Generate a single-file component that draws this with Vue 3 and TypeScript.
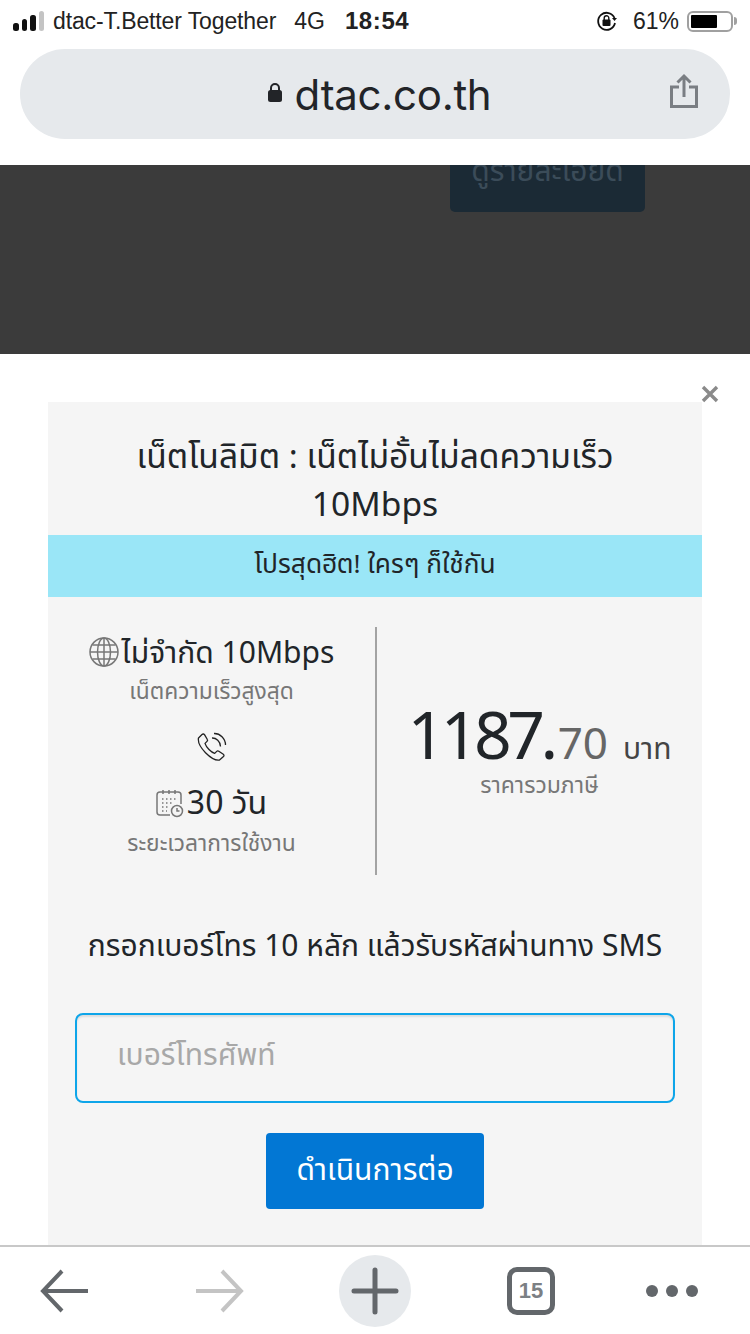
<script setup lang="ts">
const signalBars = [
  { h: 8, on: true },
  { h: 12, on: true },
  { h: 16, on: true },
  { h: 20, on: false },
]
</script>

<template>
  <div class="phone">
    <div class="status">
      <div class="signal">
        <i v-for="(b, n) in signalBars" :key="n" :class="{ off: !b.on }" :style="{ height: b.h + 'px' }" />
      </div>
      <span class="carrier">dtac-T.Better Together</span>
      <span class="net">4G</span>
      <span class="time">18:54</span>
      <svg class="orient" width="22" height="22" viewBox="0 0 22 22" fill="none">
        <path d="M18.500 8A8.500 8.500 0 1 0 19 13" stroke="#111" stroke-width="1.800" />
        <path d="M16 8h5l-2.500 3z" fill="#111" />
        <rect x="6.500" y="9.500" width="8" height="6.500" rx="1" fill="#111" />
        <path d="M8.200 10V8a2.300 2.300 0 0 1 4.600 0v2" stroke="#111" stroke-width="1.400" />
      </svg>
      <span class="pct">61%</span>
      <div class="battery"><b /></div>
      <div class="nub" />
    </div>

    <div class="address-wrap">
      <div class="address">
        <svg class="lock" width="16" height="22" viewBox="0 0 16 22">
          <path d="M4 10V7a4 4 0 0 1 8 0v3" fill="none" stroke="#222428" stroke-width="2" />
          <rect x="1" y="9" width="14" height="12" rx="2.500" fill="#222428" />
        </svg>
        <span class="url">dtac.co.th</span>
        <svg class="share" width="30" height="36" viewBox="0 0 30 36" fill="none" stroke="#7a7e83" stroke-width="3">
          <path d="M10 14H2.500v19.500h25V14H20" />
          <path d="M15 24V3M8.500 9.500 15 3l6.500 6.500" />
        </svg>
      </div>
    </div>

    <div class="backdrop">
      <div class="dim-btn">ดูรายละเอียด</div>
    </div>

    <div class="sheet">
      <svg class="close" width="18" height="18" viewBox="0 0 18 18">
        <path d="M2 2l14 14M16 2 2 16" stroke="#8a8a8a" stroke-width="3.400" />
      </svg>
      <div class="card">
        <h1 class="title">เน็ตโนลิมิต : เน็ตไม่อั้นไม่ลดความเร็ว<br />10Mbps</h1>
        <div class="promo">โปรสุดฮิต! ใครๆ ก็ใช้กัน</div>
        <div class="plan">
          <div class="features">
            <div class="feature-main narrow">
              <svg width="30" height="30" viewBox="0 0 30 30" fill="none" stroke="#777" stroke-width="1.500">
                <circle cx="15" cy="15" r="14" />
                <ellipse cx="15" cy="15" rx="6.500" ry="14" />
                <path d="M15 1v28M1 15h28M3.500 8h23M3.500 22h23" />
              </svg>
              <span>ไม่จำกัด 10Mbps</span>
            </div>
            <div class="feature-sub">เน็ตความเร็วสูงสุด</div>
            <svg class="call" width="30" height="30" viewBox="0 0 30 30" fill="none" stroke="#222" stroke-width="1.300" stroke-linejoin="round">
              <path d="M5 2.500 1.500 6c-.8 4 2.500 10 7 14.700 4.500 4.500 10 8 14 7.300l4-3.500c.7-.8.6-1.700-.2-2.300l-4.500-3c-.8-.5-1.500-.4-2.100.2l-2 2c-3.500-1-8.500-6-9.700-10l2-2c.6-.6.700-1.400.2-2.100L7.500 2.600C6.800 1.800 5.800 1.800 5 2.500z" />
              <path d="M15 6c4-.3 8.500 3.500 8.500 8.500M17 1.500c6-.3 11.500 5 11.500 11.500" />
            </svg>
            <div class="feature-main">
              <svg width="28" height="28" viewBox="0 0 28 28" fill="none" stroke="#777" stroke-width="1.500">
                <path d="M14 25H4a3 3 0 0 1-3-3V5a3 3 0 0 1 3-3h18a3 3 0 0 1 3 3v9" />
                <path d="M7 0v4M13 0v4M19 0v4" />
                <path d="M6 9h14M6 13h10M6 17h7M6 21h5" stroke-dasharray="1.500 2.500" />
                <circle cx="21" cy="21" r="5.500" />
                <path d="M21 18v3h2.500" />
              </svg>
              <span>30 วัน</span>
            </div>
            <div class="feature-sub">ระยะเวลาการใช้งาน</div>
          </div>
          <div class="price-col">
            <div class="price"><span class="big">1187.</span><span class="dec">70</span><span class="unit">บาท</span></div>
            <div class="feature-sub wide">ราคารวมภาษี</div>
          </div>
        </div>
        <p class="prompt">กรอกเบอร์โทร 10 หลัก แล้วรับรหัสผ่านทาง SMS</p>
        <div class="field-wrap">
          <input class="field" type="text" placeholder="เบอร์โทรศัพท์" />
        </div>
        <div class="actions">
          <button class="go" type="button">ดำเนินการต่อ</button>
        </div>
      </div>
    </div>

    <div class="toolbar">
      <svg width="48" height="44" viewBox="0 0 48 44" fill="none" stroke="#63676b" stroke-width="4">
        <path d="M48 22H4M22 2 3 22l19 20" />
      </svg>
      <svg class="forward" width="48" height="44" viewBox="0 0 48 44" fill="none" stroke="#c4c4c4" stroke-width="4">
        <path d="M0 22h44M26 2l19 20-19 20" />
      </svg>
      <div class="plus">
        <svg width="48" height="48" viewBox="0 0 48 48" stroke="#63676b" stroke-width="5" stroke-linecap="round">
          <path d="M24 3v42M3 24h42" />
        </svg>
      </div>
      <div class="tabs">15</div>
      <div class="dots"><i /><i /><i /></div>
    </div>
  </div>
</template>

<style scoped>
.phone {
  width: 750px;
  height: 1334px;
  display: flex;
  flex-direction: column;
  overflow: hidden;
  background: #fff;
  font-family: "Noto Sans Thai", "Noto Sans", "Open Sans", "DejaVu Sans", sans-serif;
  color: #212529;
}

.status {
  height: 42px;
  flex: none;
  display: flex;
  align-items: center;
  padding: 0 13px 0 13px;
  font-family: "Liberation Sans", Arial, sans-serif;
  font-size: 23px;
  color: #222;
}
.signal {
  display: flex;
  align-items: flex-end;
  gap: 3px;
  height: 20px;
  margin-right: 9px;
}
.signal i {
  width: 5.5px;
  border-radius: 2.5px;
  background: #111;
}
.signal i.off {
  background: #c4c4c4;
}
.carrier {
  letter-spacing: -0.12px;
}
.net {
  margin-left: 18px;
}
.time {
  margin-left: 20px;
  font-size: 24px;
  font-weight: 700;
  letter-spacing: 0.6px;
  margin-right: auto;
}
.pct {
  margin-left: 15px;
}
.battery {
  width: 46px;
  height: 21px;
  margin-left: 8px;
  border: 2px solid #a0a0a0;
  border-radius: 6px;
  padding: 2px;
  box-sizing: border-box;
}
.battery b {
  display: block;
  width: 26px;
  height: 100%;
  background: #000;
  border-radius: 1px;
}
.nub {
  width: 3px;
  height: 8px;
  background: #a0a0a0;
  margin-left: 1px;
  border-radius: 0 3px 3px 0;
}

.address-wrap {
  flex: none;
  height: 123px;
  box-sizing: border-box;
  padding: 7px 20px 26px;
}
.address {
  height: 90px;
  border-radius: 45px;
  background: #e6e9ec;
  display: flex;
  align-items: center;
  justify-content: center;
  position: relative;
  padding-left: 8px;
}
.lock {
  margin-right: 12px;
  margin-top: -4px;
}
.url {
  font-family: Inter, "Liberation Sans", sans-serif;
  font-size: 42px;
  color: #222428;
  letter-spacing: -0.3px;
}
.share {
  position: absolute;
  right: 31px;
  top: 24px;
}

.backdrop {
  flex: none;
  height: 189px;
  background: #3b3b3b;
  display: flex;
  justify-content: flex-end;
  align-items: flex-start;
  padding-right: 105px;
  box-sizing: border-box;
}
.dim-btn {
  width: 195px;
  height: 47px;
  background: #1b2a35;
  border-radius: 0 0 5px 5px;
  color: #3b4c59;
  font-size: 30px;
  line-height: 14px;
  text-align: center;
  overflow: hidden;
}

.sheet {
  flex: 1;
  min-height: 0;
  position: relative;
  padding: 48px 48px 0;
  overflow: hidden;
}
.close {
  position: absolute;
  right: 31px;
  top: 31px;
}
.card {
  background: #f5f5f5;
  height: 1000px;
}
.title {
  margin: 0;
  padding: 32px 40px 0;
  height: 133px;
  box-sizing: border-box;
  font-size: 33.6px;
  line-height: 48px;
  font-weight: 400;
  text-align: center;
}
.promo {
  height: 62px;
  background: #9ae6f7;
  text-align: center;
  font-size: 26.3px;
  line-height: 60px;
}
.plan {
  margin-top: 30px;
  height: 248px;
  display: flex;
}
.features {
  width: 329px;
  box-sizing: border-box;
  border-right: 2px solid #a3a3a3;
  display: flex;
  flex-direction: column;
  align-items: center;
}
.feature-main {
  display: flex;
  align-items: center;
  gap: 3px;
  font-size: 32px;
  line-height: 48px;
  height: 50px;
}
.feature-main.narrow {
  font-size: 30px;
}
.feature-main.narrow span {
  padding-top: 3px;
}
.feature-sub {
  font-size: 22.8px;
  line-height: 30px;
  color: #777;
}
.feature-sub.wide {
  font-size: 23px;
}
.call {
  margin: 25px 0 17px;
}
.price-col {
  flex: 1;
  text-align: center;
  padding-top: 80px;
}
.price {
  line-height: 64px;
  height: 64px;
  white-space: nowrap;
}
.big {
  font-size: 66px;
  letter-spacing: -4.500px;
}
.dec {
  font-size: 44px;
  color: #666;
  margin-left: 4px;
}
.unit {
  font-size: 30px;
  margin-left: 15px;
  color: #444;
}
.prompt {
  margin: 0;
  padding-top: 48px;
  text-align: center;
  font-size: 30px;
  line-height: 48px;
}
.field-wrap {
  padding: 42px 27px 0;
}
.field {
  display: block;
  width: 100%;
  height: 90px;
  box-sizing: border-box;
  border: 2px solid #0ea5e9;
  border-radius: 8px;
  background: #f5f5f5;
  padding: 0 40px 4px;
  font: inherit;
  font-size: 30px;
  outline: none;
  box-shadow: inset 0 2px 2px rgba(0, 0, 0, 0.1);
}
.field::placeholder {
  color: #a8a8a8;
}
.actions {
  display: flex;
  justify-content: center;
  padding-top: 30px;
}
.go {
  width: 218px;
  height: 76px;
  border: 0;
  border-radius: 4px;
  background: #0277d4;
  color: #fff;
  font: inherit;
  font-size: 30px;
}

.toolbar {
  flex: none;
  height: 89px;
  box-sizing: border-box;
  border-top: 2px solid #c8c8c8;
  background: #fff;
  display: flex;
  align-items: center;
  gap: 95px;
  padding: 0 0 0 40px;
}
.forward {
  margin-left: 13px;
}
.plus {
  width: 72px;
  height: 72px;
  border-radius: 50%;
  background: #e6e9ec;
  display: flex;
  align-items: center;
  justify-content: center;
}
.tabs {
  width: 48px;
  height: 48px;
  margin-left: 1px;
  box-sizing: border-box;
  border: 5px solid #63676b;
  border-radius: 10px;
  text-align: center;
  font-family: "Liberation Sans", Arial, sans-serif;
  font-weight: 700;
  font-size: 22px;
  line-height: 38px;
  color: #7c8084;
}
.dots {
  display: flex;
  gap: 8px;
  margin-left: -4px;
}
.dots i {
  width: 12px;
  height: 12px;
  border-radius: 50%;
  background: #63676b;
}
</style>
